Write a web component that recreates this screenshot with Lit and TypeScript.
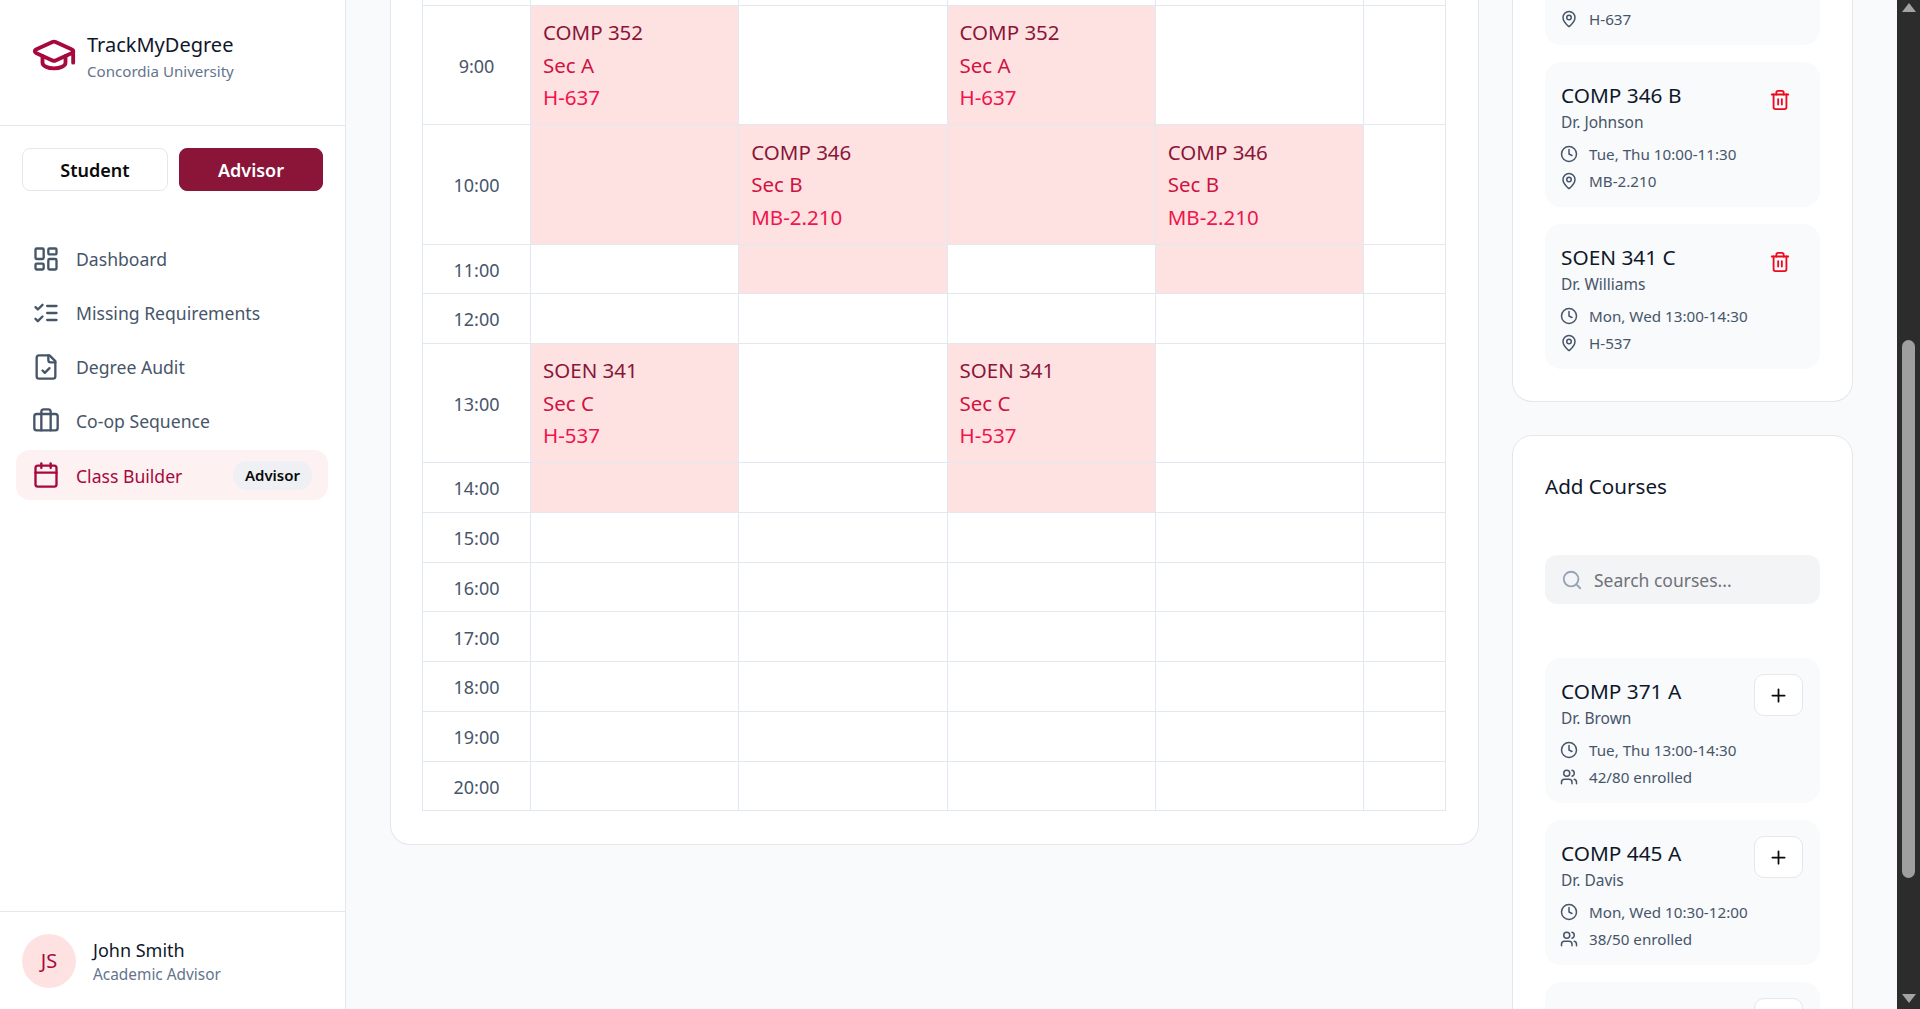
/**
 * Class Builder page of TrackMyDegree, scrolled part way down.
 */

import { LitElement, html, css, svg, nothing } from "lit";
import { customElement } from "lit/decorators.js";

const ICONS: Record<string, unknown> = {
  cap: svg`<path d="M21.42 10.922a1 1 0 0 0-.019-1.838L12.83 5.18a2 2 0 0 0-1.66 0L2.6 9.08a1 1 0 0 0 0 1.832l8.57 3.908a2 2 0 0 0 1.66 0z"/><path d="M22 10v6"/><path d="M6 12.5V16a6 3 0 0 0 12 0v-3.5"/>`,
  dashboard: svg`<rect width="7" height="9" x="3" y="3" rx="1"/><rect width="7" height="5" x="14" y="3" rx="1"/><rect width="7" height="9" x="14" y="12" rx="1"/><rect width="7" height="5" x="3" y="16" rx="1"/>`,
  checks: svg`<path d="m3 17 2 2 4-4"/><path d="m3 7 2 2 4-4"/><path d="M13 6h8"/><path d="M13 12h8"/><path d="M13 18h8"/>`,
  file: svg`<path d="M15 2H6a2 2 0 0 0-2 2v16a2 2 0 0 0 2 2h12a2 2 0 0 0 2-2V7Z"/><path d="M14 2v4a2 2 0 0 0 2 2h4"/><path d="m9 15 2 2 4-4"/>`,
  briefcase: svg`<path d="M16 20V4a2 2 0 0 0-2-2h-4a2 2 0 0 0-2 2v16"/><rect width="20" height="14" x="2" y="6" rx="2"/>`,
  calendar: svg`<path d="M8 2v4"/><path d="M16 2v4"/><rect width="18" height="18" x="3" y="4" rx="2"/><path d="M3 10h18"/>`,
  clock: svg`<circle cx="12" cy="12" r="10"/><path d="M12 6v6l4 2"/>`,
  pin: svg`<path d="M20 10c0 4.993-5.539 10.193-7.399 11.799a1 1 0 0 1-1.202 0C9.539 20.193 4 14.993 4 10a8 8 0 0 1 16 0"/><circle cx="12" cy="10" r="3"/>`,
  users: svg`<path d="M16 21v-2a4 4 0 0 0-4-4H6a4 4 0 0 0-4 4v2"/><circle cx="9" cy="7" r="4"/><path d="M22 21v-2a4 4 0 0 0-3-3.87"/><path d="M16 3.13a4 4 0 0 1 0 7.75"/>`,
  trash: svg`<path d="M3 6h18"/><path d="M19 6v14c0 1-1 2-2 2H7c-1 0-2-1-2-2V6"/><path d="M8 6V4c0-1 1-2 2-2h4c1 0 2 1 2 2v2"/><line x1="10" x2="10" y1="11" y2="17"/><line x1="14" x2="14" y1="11" y2="17"/>`,
  plus: svg`<path d="M5 12h14"/><path d="M12 5v14"/>`,
  search: svg`<circle cx="11" cy="11" r="8"/><path d="m21 21-4.3-4.3"/>`,
};

const icon = (name: string, cls: string) =>
  html`<svg class=${cls} viewBox="0 0 24 24" fill="none" stroke="currentColor" stroke-width="2" stroke-linecap="round" stroke-linejoin="round">${ICONS[name]}</svg>`;

const NAV = [
  { icon: "dashboard", label: "Dashboard" },
  { icon: "checks", label: "Missing Requirements" },
  { icon: "file", label: "Degree Audit" },
  { icon: "briefcase", label: "Co-op Sequence" },
  { icon: "calendar", label: "Class Builder", active: true, badge: "Advisor" },
];

type Block = [string, string, string] | "fill" | "";

const C352: Block = ["COMP 352", "Sec A", "H-637"];
const C346: Block = ["COMP 346", "Sec B", "MB-2.210"];
const S341: Block = ["SOEN 341", "Sec C", "H-537"];

/** Time grid; "fill" is the tail of the class that started in the row above. */
const ROWS: { time: string; size: string; cells: Block[] }[] = [
  { time: "", size: "edge", cells: ["", "", "", "", ""] },
  { time: "9:00", size: "tall", cells: [C352, "", C352, "", ""] },
  { time: "10:00", size: "tall", cells: ["fill", C346, "fill", C346, ""] },
  { time: "11:00", size: "short", cells: ["", "fill", "", "fill", ""] },
  { time: "12:00", size: "short", cells: ["", "", "", "", ""] },
  { time: "13:00", size: "tall", cells: [S341, "", S341, "", ""] },
  { time: "14:00", size: "short", cells: ["fill", "", "fill", "", ""] },
  { time: "15:00", size: "short", cells: ["", "", "", "", ""] },
  { time: "16:00", size: "short", cells: ["", "", "", "", ""] },
  { time: "17:00", size: "short", cells: ["", "", "", "", ""] },
  { time: "18:00", size: "short", cells: ["", "", "", "", ""] },
  { time: "19:00", size: "short", cells: ["", "", "", "", ""] },
  { time: "20:00", size: "short", cells: ["", "", "", "", ""] },
];

const SELECTED = [
  { title: "COMP 346 B", prof: "Dr. Johnson", when: "Tue, Thu 10:00-11:30", where: "MB-2.210" },
  { title: "SOEN 341 C", prof: "Dr. Williams", when: "Mon, Wed 13:00-14:30", where: "H-537" },
];

const AVAILABLE = [
  { title: "COMP 371 A", prof: "Dr. Brown", when: "Tue, Thu 13:00-14:30", seats: "42/80 enrolled" },
  { title: "COMP 445 A", prof: "Dr. Davis", when: "Mon, Wed 10:30-12:00", seats: "38/50 enrolled" },
  { title: "MATH 261 B", prof: "Dr. Wilson", when: "Mon, Wed 15:00-16:30", seats: "20/60 enrolled" },
];

@customElement("app-root")
export class AppRoot extends LitElement {
  static styles = css`
    :host {
      display: flex;
      height: 1009px;
      overflow: hidden;
      background: #f8fafc;
      color: #0f172a;
      font-family: "Noto Sans", "Open Sans", sans-serif;
    }

    /* sidebar */
    .sidebar {
      width: 346px;
      flex: none;
      box-sizing: border-box;
      display: flex;
      flex-direction: column;
      background: #fff;
      border-right: 1px solid #e5e7eb;
    }
    .brand {
      height: 126px;
      box-sizing: border-box;
      display: flex;
      gap: 10px;
      padding: 32px 31px 0;
      border-bottom: 1px solid #e5e7eb;
    }
    .cap {
      width: 46px;
      height: 46px;
      color: #a6093d;
    }
    .brand-name {
      font-size: 20px;
      line-height: 28px;
      margin-top: -1px;
    }
    .brand-sub {
      font-size: 15.1px;
      line-height: 24px;
      color: #64748b;
    }
    .roles {
      display: flex;
      gap: 11px;
      padding: 22px 22px 0;
    }
    .role {
      flex: 1;
      height: 43px;
      box-sizing: border-box;
      display: flex;
      align-items: center;
      justify-content: center;
      border: 1px solid #e5e7eb;
      border-radius: 8px;
      font-size: 18px;
      font-weight: 600;
      color: #0a0a0a;
    }
    .role:first-child {
      flex: none;
      width: 146px;
    }
    .role.on {
      background: #8a1538;
      border-color: #8a1538;
      color: #fff;
    }
    .nav {
      display: flex;
      flex-direction: column;
      gap: 4px;
      padding: 43px 17px 0 16px;
    }
    .nav-item {
      height: 50px;
      display: flex;
      align-items: center;
      gap: 16px;
      padding: 0 16px;
      border-radius: 14px;
      font-size: 17.6px;
      color: #475569;
    }
    .nav-item.on {
      background: #fef1f1;
      color: #a6093d;
    }
    .nav-item.on .nav-label {
      padding-top: 1px;
    }
    .nav-icon {
      width: 28px;
      height: 28px;
      flex: none;
    }
    .badge {
      margin-left: auto;
      height: 29px;
      padding: 0 12px;
      display: flex;
      align-items: center;
      border-radius: 14px;
      background: #eef0f4;
      font-size: 15px;
      font-weight: 600;
      color: #0a0a0a;
    }
    .user {
      margin-top: auto;
      height: 98px;
      box-sizing: border-box;
      display: flex;
      align-items: center;
      gap: 17px;
      padding: 0 22px;
      border-top: 1px solid #e5e7eb;
    }
    .avatar {
      width: 54px;
      height: 54px;
      flex: none;
      display: flex;
      align-items: center;
      justify-content: center;
      border-radius: 50%;
      background: #fee2e2;
      font-size: 20px;
      color: #a6093d;
    }
    .user-info {
      margin-top: 1px;
    }
    .user-name {
      font-size: 18px;
      line-height: 26px;
    }
    .user-role {
      margin-top: 1px;
      font-size: 15.4px;
      line-height: 22px;
      color: #64748b;
    }

    /* page body, cut off at the top because the page is scrolled */
    .main {
      flex: 1;
      display: flex;
      align-items: flex-start;
      gap: 33px;
      padding: 0 44px 0 44px;
      min-width: 0;
    }
    .card {
      box-sizing: border-box;
      background: #fff;
      border: 1px solid #e5e7eb;
      border-radius: 20px;
    }
    .card.cut {
      border-top: 0;
      border-top-left-radius: 0;
      border-top-right-radius: 0;
    }
    .grid-card {
      width: 1089px;
      flex: none;
      padding: 0 32px 33px 31px;
    }
    table {
      width: 1024px;
      table-layout: fixed;
      border-collapse: collapse;
    }
    col.time-col {
      width: 108px;
    }
    col.day-col {
      width: 208.25px;
    }
    td {
      box-sizing: border-box;
      padding: 0 12px;
      border: 1px solid #e2e8f0;
      font-size: 20.5px;
      line-height: 32.5px;
    }
    tr.edge td {
      height: 5px;
      padding: 0;
      border-top: 0;
      line-height: 0;
    }
    tr.tall td {
      height: 119.5px;
    }
    tr.short td {
      height: 49.7px;
    }
    tr td.time {
      padding-top: 2px;
      text-align: center;
      font-size: 18px;
      color: #475569;
    }
    td.booked {
      background: #fee2e2;
    }
    .c-title {
      color: #8a1538;
    }
    .c-sec {
      color: #cf1242;
    }
    .c-room {
      color: #f0134d;
    }

    .side {
      width: 341px;
      flex: none;
      display: flex;
      flex-direction: column;
      gap: 33px;
    }
    .list {
      display: flex;
      flex-direction: column;
      gap: 17px;
    }
    .selected-card {
      padding: 0 32px 32px;
    }
    .add-card {
      padding: 0 32px;
    }
    .add-title {
      padding-top: 33px;
      font-size: 20.6px;
      line-height: 34px;
    }
    .search {
      height: 49px;
      margin: 52px 0 54px;
      display: flex;
      align-items: center;
      gap: 11px;
      padding: 0 16px;
      border-radius: 12px;
      background: #f3f4f6;
      font-size: 17.5px;
      color: #71717a;
    }
    .search-icon {
      width: 22px;
      height: 22px;
      color: #94a3b8;
    }
    .item {
      padding: 16px 17px 13px 16px;
      border-radius: 16px;
      background: #f8fafc;
    }
    .item.tail {
      padding-top: 5px;
      padding-bottom: 13px;
      border-top-left-radius: 0;
      border-top-right-radius: 0;
    }
    .item-head {
      display: flex;
      justify-content: space-between;
      align-items: flex-start;
      height: 62px;
    }
    .item-title {
      font-size: 20.8px;
      line-height: 34px;
    }
    .item-prof {
      font-size: 15.5px;
      line-height: 20px;
      color: #475569;
    }
    .item-btn {
      width: 49px;
      height: 42px;
      box-sizing: border-box;
      display: flex;
      align-items: center;
      justify-content: center;
      border-radius: 10px;
    }
    .item-btn.add {
      background: #fff;
      border: 1px solid #e5e7eb;
    }
    .trash {
      width: 22px;
      height: 22px;
      margin: 2px 0 0 2px;
      color: #ee0a1e;
    }
    .plus {
      width: 21px;
      height: 21px;
      color: #0a0a0a;
    }
    .meta {
      display: flex;
      align-items: center;
      gap: 11px;
      height: 27px;
      font-size: 15.2px;
      color: #475569;
    }
    .meta-icon {
      width: 18px;
      height: 18px;
      margin-left: -1px;
      flex: none;
    }

    /* browser scrollbar in the dark theme */
    .scrollbar {
      width: 23px;
      flex: none;
      box-sizing: border-box;
      display: flex;
      flex-direction: column;
      align-items: center;
      background: #2c2c2c;
      padding: 3px 0 6px;
    }
    .arrow-up,
    .arrow-down {
      width: 0;
      height: 0;
      border-left: 7px solid transparent;
      border-right: 7px solid transparent;
    }
    .arrow-up {
      border-bottom: 9px solid #a3a3a3;
    }
    .arrow-down {
      border-top: 9px solid #a3a3a3;
    }
    .thumb {
      width: 13px;
      height: 538px;
      margin-top: 328px;
      margin-bottom: auto;
      border-radius: 7px;
      background: #9f9f9f;
    }
  `;

  private _renderCell(cell: Block) {
    if (cell === "") return html`<td></td>`;
    if (cell === "fill") return html`<td class="booked"></td>`;
    return html`<td class="booked">
      <div class="c-title">${cell[0]}</div>
      <div class="c-sec">${cell[1]}</div>
      <div class="c-room">${cell[2]}</div>
    </td>`;
  }

  private _renderSchedule() {
    return html`<section class="card cut grid-card">
      <table>
        <colgroup>
          <col class="time-col" />
          <col class="day-col" /><col class="day-col" /><col class="day-col" /><col class="day-col" />
          <col />
        </colgroup>
        <tbody>
          ${ROWS.map(
            (r) => html`<tr class=${r.size}>
              <td class="time">${r.time}</td>
              ${r.cells.map((c) => this._renderCell(c))}
            </tr>`
          )}
        </tbody>
      </table>
    </section>`;
  }

  private _renderItem(c: { title: string; prof: string; when: string; where?: string; seats?: string }, adding: boolean) {
    return html`<div class="item">
      <div class="item-head">
        <div>
          <div class="item-title">${c.title}</div>
          <div class="item-prof">${c.prof}</div>
        </div>
        <div class="item-btn ${adding ? "add" : ""}">
          ${adding ? icon("plus", "plus") : icon("trash", "trash")}
        </div>
      </div>
      <div class="meta">${icon("clock", "meta-icon")}<span>${c.when}</span></div>
      ${c.where ? html`<div class="meta">${icon("pin", "meta-icon")}<span>${c.where}</span></div>` : nothing}
      ${c.seats ? html`<div class="meta">${icon("users", "meta-icon")}<span>${c.seats}</span></div>` : nothing}
    </div>`;
  }

  render() {
    return html`
      <aside class="sidebar">
        <div class="brand">
          ${icon("cap", "cap")}
          <div>
            <div class="brand-name">TrackMyDegree</div>
            <div class="brand-sub">Concordia University</div>
          </div>
        </div>
        <div class="roles">
          <div class="role">Student</div>
          <div class="role on">Advisor</div>
        </div>
        <nav class="nav">
          ${NAV.map(
            (n) => html`<div class="nav-item ${n.active ? "on" : ""}">
              ${icon(n.icon, "nav-icon")}
              <span class="nav-label">${n.label}</span>
              ${n.badge ? html`<span class="badge">${n.badge}</span>` : nothing}
            </div>`
          )}
        </nav>
        <div class="user">
          <div class="avatar">JS</div>
          <div class="user-info">
            <div class="user-name">John Smith</div>
            <div class="user-role">Academic Advisor</div>
          </div>
        </div>
      </aside>
      <main class="main">
        ${this._renderSchedule()}
        <div class="side">
          <section class="card cut selected-card">
            <div class="list">
              <div class="item tail">
                <div class="meta">${icon("pin", "meta-icon")}<span>H-637</span></div>
              </div>
              ${SELECTED.map((c) => this._renderItem(c, false))}
            </div>
          </section>
          <section class="card add-card">
            <div class="add-title">Add Courses</div>
            <div class="search">${icon("search", "search-icon")}<span>Search courses...</span></div>
            <div class="list">
              ${AVAILABLE.map((c) => this._renderItem(c, true))}
            </div>
          </section>
        </div>
      </main>
      <div class="scrollbar">
        <div class="arrow-up"></div>
        <div class="thumb"></div>
        <div class="arrow-down"></div>
      </div>
    `;
  }
}
